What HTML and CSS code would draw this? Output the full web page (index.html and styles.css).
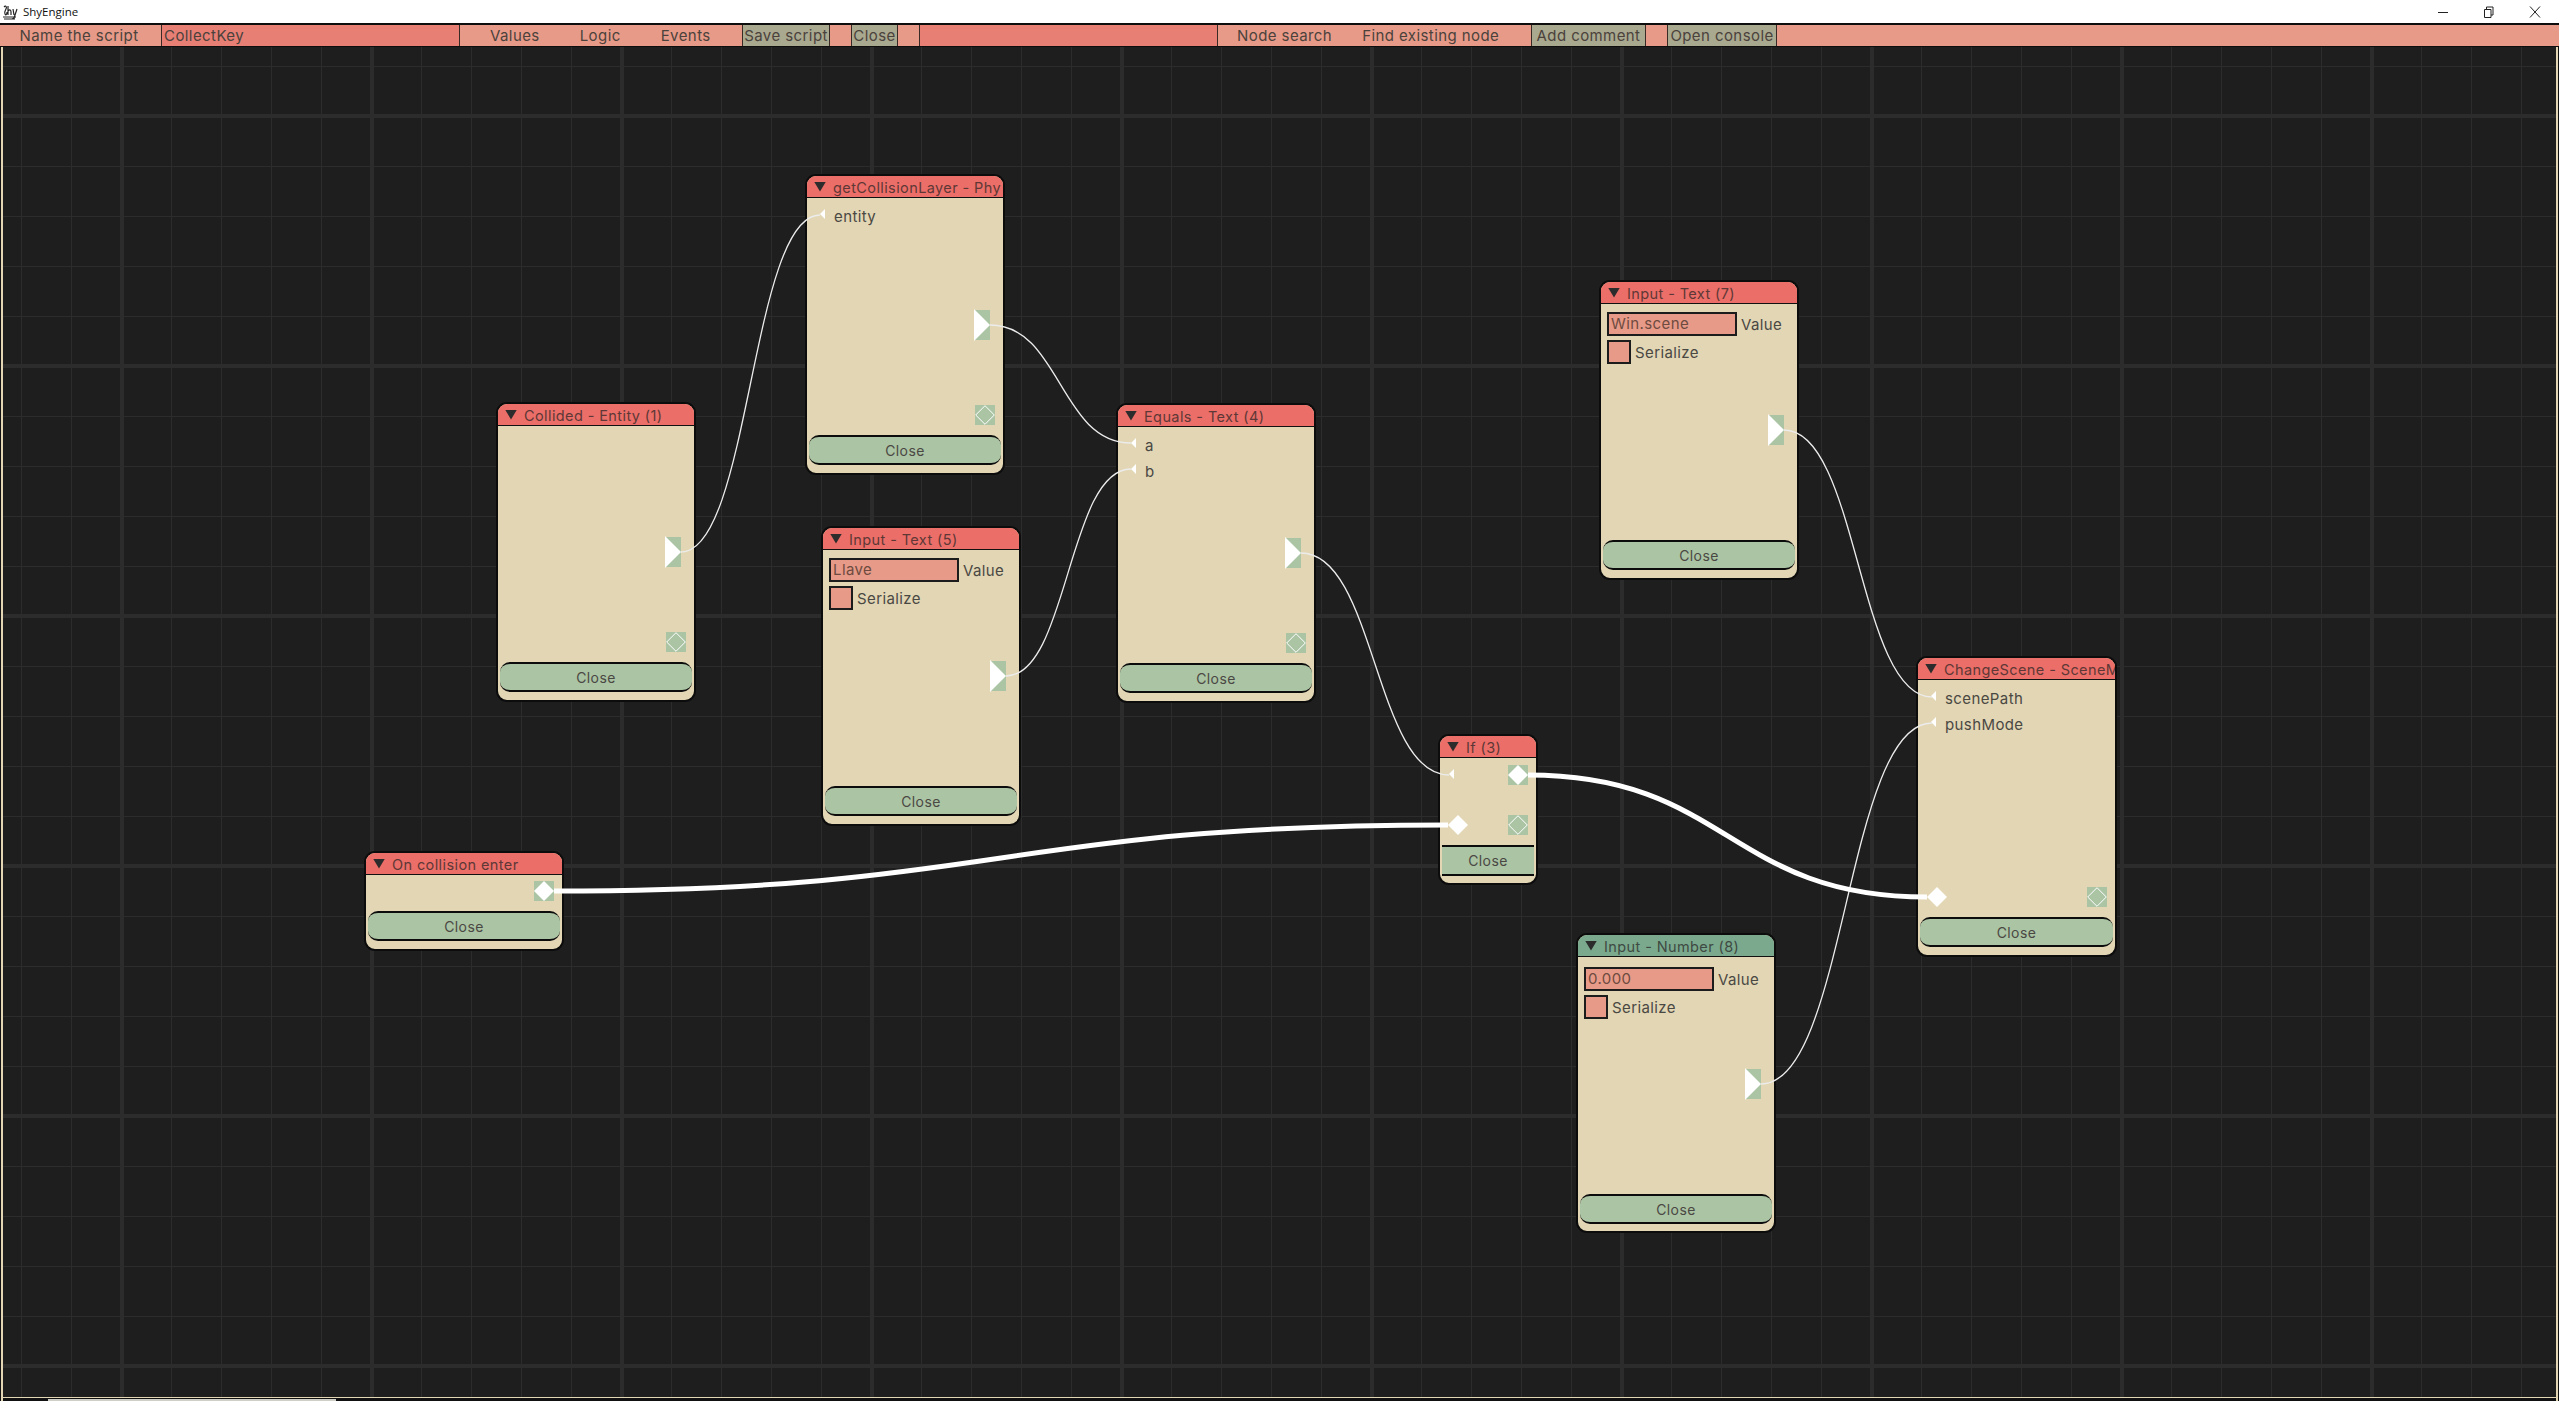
FILE: index.html
```html
<!DOCTYPE html>
<html lang="en">
<head>
<meta charset="utf-8">
<title>ShyEngine</title>
<link rel="stylesheet" href="styles.css">
</head>
<body>
<div class="app">
  <header class="titlebar">
    <svg class="app-icon" viewBox="0 0 16 16" width="16" height="16"><path d="M2 3c2-2 3 0 2 2S2 8 3 10c1 2 2 0 2-2M6 2v9M6 7c2-2 3-1 3 1v3M11 5l1 6M15 5l-3 9-2 1M1 13h13M2 15h11" fill="none" stroke="#222" stroke-width="1.2"/></svg>
    <span class="app-name">ShyEngine</span>
    <div class="win-controls">
      <svg class="win-btn" viewBox="0 0 12 12" width="12" height="12"><path d="M1 6.5h10" stroke="#222" stroke-width="1"/></svg>
      <svg class="win-btn" viewBox="0 0 12 12" width="12" height="12"><path d="M1.5 3.5h6.500v8h-6.500zM3.500 3.500v-2.500h6.500v8h-2" fill="none" stroke="#222" stroke-width="1"/></svg>
      <svg class="win-btn" viewBox="0 0 12 12" width="12" height="12"><path d="M1 .5l10 11M11 .5l-10 11" stroke="#222" stroke-width="1"/></svg>
    </div>
  </header>

  <nav class="toolbar">
    <div class="tb-label">Name the script</div>
    <div class="tb-input">CollectKey</div>
    <div class="tb-menu tb-menu-a"><span>Values</span><span>Logic</span><span>Events</span></div>
    <button class="tb-btn tb-save">Save script</button>
    <div class="tb-gap"></div>
    <button class="tb-btn tb-close">Close</button>
    <div class="tb-gap"></div>
    <div class="tb-input tb-search"></div>
    <div class="tb-menu tb-menu-b"><span>Node search</span><span>Find existing node</span></div>
    <button class="tb-btn tb-comment">Add comment</button>
    <div class="tb-gap"></div>
    <button class="tb-btn tb-console">Open console</button>
    <div class="tb-fill"></div>
  </nav>

  <main class="canvas">
    <section class="node n-collided">
      <div class="hdr"><i class="caret"></i><span>Collided - Entity (1)</span></div>
      <div class="body"></div>
      <svg class="pin-out" viewBox="0 0 16 32"><rect y="1" width="16" height="30" fill="#abc4a4"/><polygon points="0,0 16,16 0,32" fill="#fff"/></svg>
      <svg class="pin-hollow" viewBox="0 0 20 20"><rect width="20" height="20" fill="#abc4a4"/><polygon points="10,.7 19.300,10 10,19.300 .7,10" fill="none" stroke="#fff" stroke-width="1"/></svg>
      <button class="close-btn">Close</button>
    </section>

    <section class="node n-getlayer">
      <div class="hdr"><i class="caret"></i><span>getCollisionLayer - Phy</span></div>
      <div class="body"><div class="row"><i class="pin-in"></i>entity</div></div>
      <svg class="pin-out" viewBox="0 0 16 32"><rect y="1" width="16" height="30" fill="#abc4a4"/><polygon points="0,0 16,16 0,32" fill="#fff"/></svg>
      <svg class="pin-hollow" viewBox="0 0 20 20"><rect width="20" height="20" fill="#abc4a4"/><polygon points="10,.7 19.300,10 10,19.300 .7,10" fill="none" stroke="#fff" stroke-width="1"/></svg>
      <button class="close-btn">Close</button>
    </section>

    <section class="node n-input5">
      <div class="hdr"><i class="caret"></i><span>Input - Text (5)</span></div>
      <div class="body body-form">
        <div class="field"><div class="box">Llave</div>Value</div>
        <div class="field"><div class="check"></div>Serialize</div>
      </div>
      <svg class="pin-out" viewBox="0 0 16 32"><rect y="1" width="16" height="30" fill="#abc4a4"/><polygon points="0,0 16,16 0,32" fill="#fff"/></svg>
      <button class="close-btn">Close</button>
    </section>

    <section class="node n-equals">
      <div class="hdr"><i class="caret"></i><span>Equals - Text (4)</span></div>
      <div class="body"><div class="row"><i class="pin-in"></i>a</div><div class="row"><i class="pin-in"></i>b</div></div>
      <svg class="pin-out" viewBox="0 0 16 32"><rect y="1" width="16" height="30" fill="#abc4a4"/><polygon points="0,0 16,16 0,32" fill="#fff"/></svg>
      <svg class="pin-hollow" viewBox="0 0 20 20"><rect width="20" height="20" fill="#abc4a4"/><polygon points="10,.7 19.300,10 10,19.300 .7,10" fill="none" stroke="#fff" stroke-width="1"/></svg>
      <button class="close-btn">Close</button>
    </section>

    <section class="node n-enter">
      <div class="hdr"><i class="caret"></i><span>On collision enter</span></div>
      <div class="body"></div>
      <svg class="pin-flow" viewBox="0 0 20 20"><rect width="20" height="20" fill="#abc4a4"/><polygon points="10,0 20,10 10,20 0,10" fill="#fff"/></svg>
      <button class="close-btn">Close</button>
    </section>

    <section class="node n-if">
      <div class="hdr"><i class="caret"></i><span>If (3)</span></div>
      <div class="body"><div class="row"><i class="pin-in"></i></div></div>
      <svg class="pin-flow" viewBox="0 0 20 20"><rect width="20" height="20" fill="#abc4a4"/><polygon points="10,0 20,10 10,20 0,10" fill="#fff"/></svg>
      <svg class="pin-flow-in" viewBox="0 0 20 20"><polygon points="10,0 20,10 10,20 0,10" fill="#fff"/></svg>
      <svg class="pin-hollow" viewBox="0 0 20 20"><rect width="20" height="20" fill="#abc4a4"/><polygon points="10,.7 19.300,10 10,19.300 .7,10" fill="none" stroke="#fff" stroke-width="1"/></svg>
      <button class="close-btn">Close</button>
    </section>

    <section class="node n-input7">
      <div class="hdr"><i class="caret"></i><span>Input - Text (7)</span></div>
      <div class="body body-form">
        <div class="field"><div class="box">Win.scene</div>Value</div>
        <div class="field"><div class="check"></div>Serialize</div>
      </div>
      <svg class="pin-out" viewBox="0 0 16 32"><rect y="1" width="16" height="30" fill="#abc4a4"/><polygon points="0,0 16,16 0,32" fill="#fff"/></svg>
      <button class="close-btn">Close</button>
    </section>

    <section class="node n-number">
      <div class="hdr hdr-green"><i class="caret"></i><span>Input - Number (8)</span></div>
      <div class="body body-form">
        <div class="field"><div class="box">0.000</div>Value</div>
        <div class="field"><div class="check"></div>Serialize</div>
      </div>
      <svg class="pin-out" viewBox="0 0 16 32"><rect y="1" width="16" height="30" fill="#abc4a4"/><polygon points="0,0 16,16 0,32" fill="#fff"/></svg>
      <button class="close-btn">Close</button>
    </section>

    <section class="node n-scene">
      <div class="hdr"><i class="caret"></i><span>ChangeScene - SceneM</span></div>
      <div class="body"><div class="row"><i class="pin-in"></i>scenePath</div><div class="row"><i class="pin-in"></i>pushMode</div></div>
      <svg class="pin-flow-in" viewBox="0 0 20 20"><polygon points="10,0 20,10 10,20 0,10" fill="#fff"/></svg>
      <svg class="pin-hollow" viewBox="0 0 20 20"><rect width="20" height="20" fill="#abc4a4"/><polygon points="10,.7 19.300,10 10,19.300 .7,10" fill="none" stroke="#fff" stroke-width="1"/></svg>
      <button class="close-btn">Close</button>
    </section>

    <svg class="wires" viewBox="0 47 2559 1354">
      <g class="wire-thin">
        <path d="M681 552C750 552 751 215 820 215"/>
        <path d="M990 325C1060 325 1060 443 1131 443"/>
        <path d="M1006 676C1068 676 1068 469 1131 469"/>
        <path d="M1301 553C1375 553 1375 775 1449 775"/>
        <path d="M1784 430C1858 430 1858 697 1932 697"/>
        <path d="M1761 1084C1846 1084 1846 723 1932 723"/>
      </g>
      <g class="wire-thick">
        <path d="M554 891C1001 891 1001 825 1448 825"/>
        <path d="M1528 775C1728 775 1728 897 1927 897"/>
      </g>
    </svg>
    <div class="scroll-thumb"></div>
  </main>
</div>
</body>
</html>
```
FILE: styles.css
```css
* { box-sizing: border-box; }
html, body { margin: 0; height: 100%; }
body { font-family: Inter, "Noto Sans", sans-serif; color: #4a4843; background: #1e1e1e; overflow: hidden; }
.app { display: flex; flex-direction: column; height: 1401px; width: 2559px; }

.titlebar { height: 23px; background: #fff; display: flex; align-items: center; flex: none; }
.app-icon { margin-left: 2px; }
.app-name { margin-left: 5px; font: 11.5px "Open Sans", sans-serif; color: #111; }
.win-controls { margin-left: auto; display: flex; gap: 34px; padding-right: 18px; }

.toolbar { height: 24px; flex: none; display: flex; background: #e89a88; border-top: 2px solid #0e0e0e; border-bottom: 1px solid #0e0e0e; font-size: 15px; letter-spacing: .42px; color: #4b423c; line-height: 21px; }
.tb-label { width: 161px; padding-right: 3px; text-align: center; white-space: nowrap; }
.tb-input { width: 299px; background: #e87f75; border-left: 1px solid #3a2a26; border-right: 1px solid #3a2a26; padding-left: 2px; }
.tb-search { width: 299px; }
.tb-menu { display: flex; white-space: nowrap; }
.tb-menu-a { width: 282px; padding-left: 30px; gap: 40px; }
.tb-menu-b { width: 313px; padding-left: 19px; gap: 30px; }
.tb-btn { font: inherit; letter-spacing: inherit; color: inherit; background: #a9a98f; border: 0; border-left: 1px solid #3a2a26; border-right: 1px solid #3a2a26; padding: 0; white-space: nowrap; height: 21px; line-height: 21px; }
.tb-save { width: 88px; }
.tb-close { width: 47px; }
.tb-comment { width: 115px; }
.tb-console { width: 110px; }
.tb-gap { width: 21px; }
.tb-fill { flex: 1; }

.canvas {
  flex: 1; position: relative; overflow: hidden;
  background-color: #1e1e1e;
  background-image:
    linear-gradient(90deg, #2c2c2c 4px, transparent 4px),
    linear-gradient(#2c2c2c 4px, transparent 4px),
    linear-gradient(90deg, #2c2c2c 1px, transparent 1px),
    linear-gradient(#2c2c2c 1px, transparent 1px);
  background-size: 250px 100%, 100% 250px, 50px 100%, 100% 50px;
  background-position: 120px 0, 0 67px, 21px 0, 0 19px;
  box-shadow: inset 1px 0 #111, inset 3px 0 #e2d6b4, inset -1px 0 #111, inset -3px 0 #e2d6b4, inset 0 -3px #111, inset 0 -4px #e2d6b4;
}
.scroll-thumb { position: absolute; left: 48px; bottom: 0; width: 288px; height: 2px; background: #cfcfc8; }

.node { position: absolute; width: 200px; height: 300px; display: flex; flex-direction: column; background: #e2d6b4; border: 2px solid #0c0c0c; border-radius: 11px; overflow: hidden; font-size: 15px; letter-spacing: .4px; }
.n-collided { left: 496px; top: 355px; }
.n-getlayer { left: 805px; top: 127px; height: 301px; }
.n-input5 { left: 821px; top: 479px; }
.n-equals { left: 1116px; top: 356px; }
.n-enter { left: 364px; top: 804px; height: 100px; }
.n-if { left: 1438px; top: 687px; width: 100px; height: 151px; }
.n-input7 { left: 1599px; top: 233px; }
.n-number { left: 1576px; top: 886px; }
.n-scene { left: 1916px; top: 609px; width: 201px; height: 301px; }

.hdr { height: 22px; flex: none; background: #ec6e68; border-bottom: 1px solid #111; display: flex; align-items: center; padding: 1px 0 0 7px; color: #5e3836; font-size: 14.5px; white-space: nowrap; overflow: hidden; }
.hdr-green { background: #7aa98e; color: #3f4a42; }
.caret { flex: none; width: 12px; height: 10px; margin: -1px 7px 0 0; background: #2c2c2c; clip-path: polygon(0 0, 100% 0, 50% 100%); }

.body { flex: 1; padding-top: 5px; }
.row { position: relative; height: 26px; line-height: 28px; padding-left: 27px; }
.pin-in { position: absolute; left: 13px; top: 6px; width: 5px; height: 10px; background: #fff; clip-path: polygon(100% 0, 100% 100%, 0 50%); }
.n-if .pin-in { left: 9px; }

.body-form { padding: 8px 6px 0; }
.n-number .body-form { padding-top: 10px; }
.field { display: flex; align-items: center; gap: 4px; height: 24px; margin-bottom: 4px; white-space: nowrap; }
.box { width: 130px; height: 24px; line-height: 20px; background: #e89a88; border: 2px solid #1c1c1c; padding-left: 2px; color: #6e4b40; }
.check { width: 24px; height: 24px; background: #e89a88; border: 2px solid #1c1c1c; }

.pin-out { position: absolute; left: 167px; top: 132px; width: 16px; height: 32px; }
.pin-hollow { position: absolute; left: 168px; top: 228px; width: 20px; height: 20px; }
.pin-flow { position: absolute; left: 168px; top: 28px; width: 20px; height: 20px; }
.pin-flow-in { position: absolute; left: 9px; top: 229px; width: 20px; height: 20px; }
.n-getlayer .pin-out, .n-number .pin-out { top: 133px; }
.n-getlayer .pin-hollow, .n-scene .pin-hollow { top: 229px; }
.n-scene .pin-hollow { left: 169px; }
.n-if .pin-flow { left: 68px; top: 29px; }
.n-if .pin-hollow { left: 68px; top: 79px; }
.n-if .pin-flow-in { left: 8px; top: 79px; }

.close-btn { flex: none; height: 30px; margin: 0 2px 8px; font: inherit; font-size: 14px; letter-spacing: .42px; color: #4a4843; background: #abc4a4; border: 0; border-top: 2px solid #0c0c0c; border-bottom: 2px solid #0c0c0c; border-radius: 10px; padding: 0; }
.n-number .close-btn { margin-bottom: 7px; }
.n-if .close-btn { height: 31px; margin-bottom: 7px; border-radius: 0; }

.wires { position: absolute; left: 0; top: 0; width: 2559px; height: 1354px; pointer-events: none; fill: none; stroke: #fff; }
.wire-thin { stroke-width: 1.3; stroke: #ececec; }
.wire-thick { stroke-width: 5; }
```
